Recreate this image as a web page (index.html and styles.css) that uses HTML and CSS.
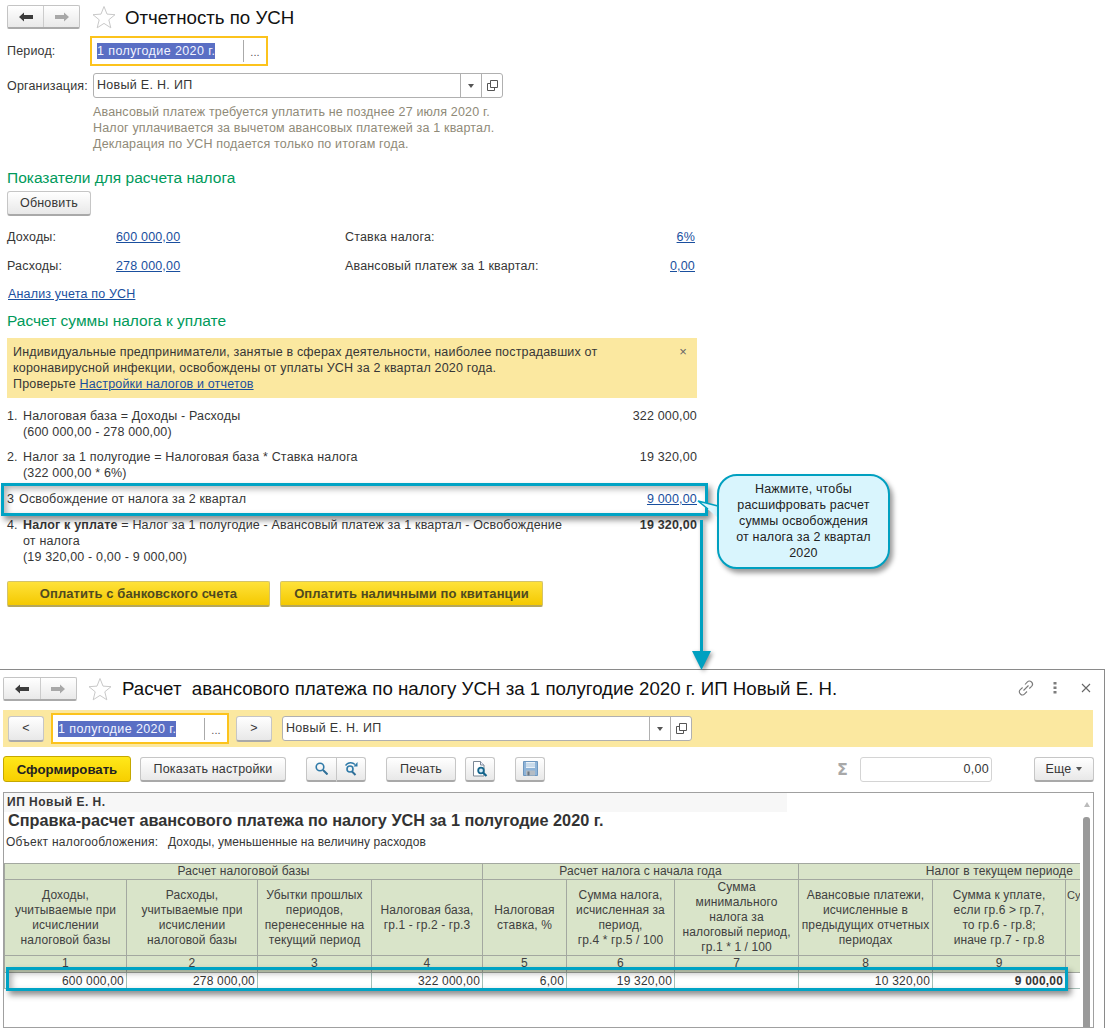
FILE: index.html
```html
<!DOCTYPE html>
<html lang="ru">
<head>
<meta charset="utf-8">
<title>Отчетность по УСН</title>
<link rel="stylesheet" href="styles.css">
</head>
<body>
<div class="page">
  <section class="form-a">
    <div class="head">
      <div class="nav">
        <span class="nav-btn"><svg width="14" height="10" viewBox="0 0 14 10"><path d="M0 5l5-4.500V3h9v4H5v2.500z" fill="#3c3c3c"/></svg></span>
        <span class="nav-btn"><svg width="14" height="10" viewBox="0 0 14 10"><path d="M14 5L9 .5V3H0v4h9v2.500z" fill="#a8a8a8"/></svg></span>
      </div>
      <svg class="star" width="24" height="24" viewBox="0 0 24 24"><path d="M12 1.500l3 7.600 8 .6-6.200 5.100 2 8-6.800-4.400-6.800 4.400 2-8L1 9.700l8-.6z" fill="#fff" stroke="#c9c9c9"/></svg>
      <h1 class="title">Отчетность по УСН</h1>
    </div>
    <div class="field-row r-period">
      <label class="lbl">Период:</label>
      <div class="period-box">
        <span class="period-text"><span class="sel">1 полугодие 2020 г.</span></span>
        <span class="dots">...</span>
      </div>
    </div>
    <div class="field-row r-org">
      <label class="lbl lbl-org">Организация:</label>
      <div class="combo combo-a">
        <span class="combo-text">Новый Е. Н. ИП</span>
        <span class="combo-btn"><i class="caret"></i></span>
        <span class="combo-btn"><svg width="11" height="11" viewBox="0 0 11 11"><path d="M3.500.5h7v7h-7zM3.500 3.500h-3v7h7v-3" fill="none" stroke="#555"/></svg></span>
      </div>
    </div>
    <div class="notes">
      <div>Авансовый платеж требуется уплатить не позднее 27 июля 2020 г.</div>
      <div>Налог уплачивается за вычетом авансовых платежей за 1 квартал.</div>
      <div>Декларация по УСН подается только по итогам года.</div>
    </div>
    <h2 class="green g1">Показатели для расчета налога</h2>
    <button class="btn btn-refresh">Обновить</button>
    <div class="stats s1">
      <span class="st-l">Доходы:</span><a class="link st-v">600 000,00</a>
      <span class="st-l2">Ставка налога:</span><a class="link st-r">6%</a>
    </div>
    <div class="stats s2">
      <span class="st-l">Расходы:</span><a class="link st-v">278 000,00</a>
      <span class="st-l2">Авансовый платеж за 1 квартал:</span><a class="link st-r">0,00</a>
    </div>
    <a class="link analysis">Анализ учета по УСН</a>
    <h2 class="green g2">Расчет суммы налога к уплате</h2>
    <div class="notice">
      <div class="notice-text">Индивидуальные предприниматели, занятые в сферах деятельности, наиболее пострадавших от<br>коронавирусной инфекции, освобождены от уплаты УСН за 2 квартал 2020 года.<br>Проверьте <a class="link">Настройки налогов и отчетов</a></div>
      <span class="notice-x">×</span>
    </div>
    <div class="item i1"><div class="num">1.</div><div class="it">Налоговая база = Доходы - Расходы<br>(600 000,00 - 278 000,00)</div><div class="val">322 000,00</div></div>
    <div class="item i2"><div class="num">2.</div><div class="it">Налог за 1 полугодие = Налоговая база * Ставка налога<br>(322 000,00 * 6%)</div><div class="val">19 320,00</div></div>
    <div class="item i3"><div class="num n3">3</div><div class="it">Освобождение от налога за 2 квартал</div><a class="link val">9 000,00</a></div>
    <div class="item i4"><div class="num">4.</div><div class="it"><b>Налог к уплате</b> = Налог за 1 полугодие - Авансовый платеж за 1 квартал - Освобождение<br>от налога<br>(19 320,00 - 0,00 - 9 000,00)</div><b class="val">19 320,00</b></div>
    <div class="pay">
      <button class="btn-pay">Оплатить с банковского счета</button>
      <button class="btn-pay">Оплатить наличными по квитанции</button>
    </div>
  </section>

  <section class="form-b">
    <div class="head-b">
      <div class="nav nav-b">
        <span class="nav-btn"><svg width="14" height="10" viewBox="0 0 14 10"><path d="M0 5l5-4.500V3h9v4H5v2.500z" fill="#3c3c3c"/></svg></span>
        <span class="nav-btn"><svg width="14" height="10" viewBox="0 0 14 10"><path d="M14 5L9 .5V3H0v4h9v2.500z" fill="#a8a8a8"/></svg></span>
      </div>
      <svg class="star-b" width="24" height="24" viewBox="0 0 24 24"><path d="M12 1.500l3 7.600 8 .6-6.200 5.100 2 8-6.800-4.400-6.800 4.400 2-8L1 9.700l8-.6z" fill="#fff" stroke="#c9c9c9"/></svg>
      <h1 class="title-b">Расчет&nbsp; авансового платежа по налогу УСН за 1 полугодие 2020 г. ИП Новый Е. Н.</h1>
      <div class="win-icons">
        <svg class="ic-link" width="16" height="16" viewBox="0 0 16 16"><path d="M5.500 10.500l5-5M7 4.500l2.200-2.400a2.900 2.900 0 0 1 4.400 4.200l-2.300 2.200M9 11.500l-2.300 2.400a2.900 2.900 0 0 1-4.400-4.200l2.300-2.200" fill="none" stroke="#7a7a7a" stroke-width="1.100"/></svg>
        <svg width="4" height="12" viewBox="0 0 4 12"><path d="M.5 0h3v2.500h-3zM.5 4.500h3V7h-3zM.5 9h3v2.500h-3z" fill="#7d7d7d"/></svg>
        <svg width="10" height="10" viewBox="0 0 10 10"><path d="M1 1l8 8M9 1l-8 8" stroke="#666" stroke-width="1.100"/></svg>
      </div>
    </div>
    <div class="band">
      <button class="btn btn-step">&lt;</button>
      <div class="period-box period-b">
        <span class="period-text"><span class="sel">1 полугодие 2020 г.</span></span>
        <span class="dots">...</span>
      </div>
      <button class="btn btn-step">&gt;</button>
      <div class="combo combo-b">
        <span class="combo-text">Новый Е. Н. ИП</span>
        <span class="combo-btn"><i class="caret"></i></span>
        <span class="combo-btn"><svg width="11" height="11" viewBox="0 0 11 11"><path d="M3.500.5h7v7h-7zM3.500 3.500h-3v7h7v-3" fill="none" stroke="#555"/></svg></span>
      </div>
    </div>
    <div class="tools">
      <button class="btn-go">Сформировать</button>
      <button class="btn t-settings">Показать настройки</button>
      <div class="group">
        <button class="btn g-btn"><svg width="13" height="13" viewBox="0 0 13 13"><circle cx="5" cy="5" r="3.800" fill="none" stroke="#2f7aa8" stroke-width="1.600"/><path d="M8 8l4.500 4.500" stroke="#2f6f98" stroke-width="2"/></svg></button>
        <button class="btn g-btn"><svg width="15" height="15" viewBox="0 0 15 15"><circle cx="6" cy="8" r="3" fill="none" stroke="#2f7aa8" stroke-width="1.600"/><path d="M8 10.500l3.500 3.500" stroke="#2f6f98" stroke-width="2"/><path d="M1.500 4.500C4 1 8.500 1 11 3.500" fill="none" stroke="#2f7aa8" stroke-width="1.300"/><path d="M13.500 1v4.500h-4z" fill="#2f7aa8"/></svg></button>
      </div>
      <button class="btn t-print">Печать</button>
      <button class="btn t-icon t-prev"><svg width="15" height="16" viewBox="0 0 15 16"><path d="M.5.5h7l3.500 3.500v11H.5z" fill="#fff" stroke="#7b8794"/><path d="M7.500.5V4H11" fill="#eef" stroke="#7b8794"/><circle cx="8" cy="9.500" r="2.800" fill="#d5ecf8" stroke="#14658c" stroke-width="1.800"/><path d="M10 11.500l3.500 3.500" stroke="#14658c" stroke-width="2.200"/></svg></button>
      <button class="btn t-icon t-save"><svg width="15" height="15" viewBox="0 0 15 15"><path d="M.5.5h14v14H.5z" fill="#8fb4d8" stroke="#6e97bf"/><path d="M3 1h9v6H3z" fill="#e9f1f8"/><path d="M3 3h9M3 5h9" stroke="#a9c4dc"/><path d="M3 9.500h9V14.500H3z" fill="#b4bcc4"/><path d="M4.500 10.500h2v4h-2z" fill="#6a7580"/></svg></button>
      <span class="sigma">Σ</span>
      <div class="sum">0,00</div>
      <button class="btn t-more">Еще<i class="caret"></i></button>
    </div>
    <div class="report">
      <div class="rep-org">ИП Новый Е. Н.</div>
      <div class="rep-title">Справка-расчет авансового платежа по налогу УСН за 1 полугодие 2020 г.</div>
      <div class="rep-obj"><span>Объект налогообложения:</span><span>Доходы, уменьшенные на величину расходов</span></div>
      <div class="tbl-wrap">
        <table class="tbl">
          <colgroup>
            <col class="c1"><col class="c2"><col class="c3"><col class="c4"><col class="c5"><col class="c6"><col class="c7"><col class="c8"><col class="c9"><col class="c10">
          </colgroup>
          <tr class="h1">
            <th colspan="4">Расчет налоговой базы</th>
            <th colspan="3">Расчет налога с начала года</th>
            <th colspan="3" class="th-right">Налог в текущем периоде</th>
          </tr>
          <tr class="h2">
            <th>Доходы,<br>учитываемые при<br>исчислении<br>налоговой базы</th>
            <th>Расходы,<br>учитываемые при<br>исчислении<br>налоговой базы</th>
            <th>Убытки прошлых<br>периодов,<br>перенесенные на<br>текущий период</th>
            <th>Налоговая база,<br>гр.1 - гр.2 - гр.3</th>
            <th>Налоговая<br>ставка, %</th>
            <th>Сумма налога,<br>исчисленная за<br>период,<br>гр.4 * гр.5 / 100</th>
            <th>Сумма<br>минимального<br>налога за<br>налоговый период,<br>гр.1 * 1 / 100</th>
            <th>Авансовые платежи,<br>исчисленные в<br>предыдущих отчетных<br>периодах</th>
            <th>Сумма к уплате,<br>если гр.6 &gt; гр.7,<br>то гр.6 - гр.8;<br>иначе гр.7 - гр.8</th>
            <th class="th-clip">Су</th>
          </tr>
          <tr class="h3">
            <th>1</th><th>2</th><th>3</th><th>4</th><th>5</th><th>6</th><th>7</th><th>8</th><th>9</th><th></th>
          </tr>
          <tr class="data">
            <td>600 000,00</td><td>278 000,00</td><td></td><td>322 000,00</td><td>6,00</td><td>19 320,00</td><td></td><td>10 320,00</td><td><b>9 000,00</b></td><td></td>
          </tr>
        </table>
      </div>
      <span class="sb-arrow"></span>
      <span class="sb-thumb"></span>
    </div>
  </section>

  <div class="hl hl-top"></div>
  <div class="hl hl-bottom"></div>
  <svg class="pointer" width="24" height="18" viewBox="0 0 24 18"><path d="M1 1l19 5v11z" fill="#d9f5fd"/><path d="M21 6L1 1l10 8" fill="none" stroke="#00a0c0" stroke-width="1.600"/></svg>
  <div class="callout">Нажмите, чтобы расшифровать расчет суммы освобождения от налога за 2 квартал 2020</div>
  <svg class="arrow" width="28" height="156" viewBox="0 0 28 156"><path d="M9.500 4v132" stroke="#00a0c0" stroke-width="3"/><path d="M0 135h19l-9.500 19z" fill="#00a0c0"/></svg>
</div>
</body>
</html>
```

FILE: styles.css
```css
* { box-sizing: border-box; }
html, body { margin: 0; padding: 0; background: #fff; }
body { font-family: "Liberation Sans", Arial, sans-serif; font-size: 12.5px; letter-spacing: .17px; line-height: 16px; color: #363636; }
.page { position: relative; width: 1108px; height: 1028px; overflow: hidden; }
h1, h2 { margin: 0; font-weight: normal; }
button { font-family: inherit; font-size: 12.5px; letter-spacing: .17px; padding: 0; color: #363636; }

.form-a { height: 669px; padding: 5px 0 0 7px; }
.head { display: flex; align-items: center; height: 24px; }
.nav { display: flex; flex: none; width: 73px; height: 24px; border: 1px solid #c4c4c4; border-bottom: 2px solid #aaa; border-radius: 2px; background: linear-gradient(#fff, #e9e9e9); }
.nav-btn { flex: 1; display: flex; align-items: center; justify-content: center; }
.nav-btn + .nav-btn { border-left: 1px solid #ccc; }
.star { margin-left: 12px; flex: none; }
.title { margin-left: 9px; padding-top: 2px; font-size: 18.7px; letter-spacing: 0; color: #111; line-height: 26px; }

.field-row { display: flex; align-items: center; }
.r-period { margin-top: 7px; height: 30px; }
.r-org { margin-top: 7px; height: 25px; }
.lbl { width: 83px; }
.lbl-org { width: 86px; }
.period-box { display: flex; align-items: center; width: 178px; height: 30px; border: 2px solid #fcc31c; background: #fff; }
.period-text { flex: 1; display: flex; align-items: center; height: 22px; padding-left: 5px; letter-spacing: .4px; border-right: 1px solid #aaa; }
.sel { background: #5a6fc4; color: #f2f4ff; white-space: nowrap; }
.dots { width: 22px; text-align: center; font-size: 11px; color: #555; padding-top: 2px; }
.combo { display: flex; align-items: stretch; height: 25px; border: 1px solid #b0b0b0; border-radius: 3px; background: #fff; }
.combo-a { width: 410px; }
.combo-text { flex: 1; padding-left: 3px; line-height: 23px; letter-spacing: .3px; }
.combo-btn { width: 21px; display: flex; align-items: center; justify-content: center; border-left: 1px solid #b0b0b0; }
.caret { display: block; width: 0; height: 0; border: 3px solid transparent; border-top: 4px solid #555; border-bottom: 0; }

.notes { margin: 6px 0 0 86px; color: #8f8a78; }
.green { font-size: 15.5px; letter-spacing: 0; line-height: 20px; color: #009a5b; }
.g1 { margin-top: 16px; }
.btn { height: 25px; border: 1px solid #c6c6c6; border-bottom: 2px solid #a9a9a9; border-radius: 3px; background: linear-gradient(#fff, #e8e8e8); }
.btn-refresh { display: block; margin-top: 3px; width: 84px; }
.stats { display: flex; height: 16px; width: 688px; }
.s1 { margin-top: 13px; }
.s2 { margin-top: 13px; }
.st-l { width: 109px; }
.st-v { width: 64px; white-space: nowrap; }
.st-l2 { margin-left: 165px; }
.st-r { margin-left: auto; }
.link { color: #1a4f9e; text-decoration: underline; }
.analysis { display: block; margin: 12px 0 0 1px; }
.g2 { margin-top: 9px; }
.notice { display: flex; justify-content: space-between; width: 690px; height: 60px; margin-top: 7px; padding: 6px 10px 6px 6px; background: #fbe8a0; }
.notice-x { font-size: 13px; color: #666; }
.item { display: flex; width: 690px; }
.i1 { margin-top: 10px; height: 32px; }
.i2 { margin-top: 9px; height: 32px; }
.i3 { margin-top: 10px; height: 16px; }
.i4 { margin-top: 10px; height: 48px; }
.num { width: 16px; flex: none; }
.n3 { width: 12px; }
.it { flex: 1; }
.val { flex: none; white-space: nowrap; }
.pay { display: flex; gap: 10px; margin-top: 16px; }
.btn-pay { width: 263px; height: 26px; border: 1px solid #d4c36a; border-bottom: 2px solid #b5a75c; border-radius: 2px; background: linear-gradient(#ffe23a, #f4c900); font-size: 13px; letter-spacing: .08px; font-weight: bold; color: #4f4a20; }

.form-b { width: 1105px; height: 359px; border-top: 1px solid #8a8a8a; border-right: 1px solid #8a8a8a; padding-left: 3px; }
.head-b { display: flex; align-items: flex-start; height: 40px; padding-top: 7px; }
.nav-b { width: 74px; }
.star-b { margin-left: 11px; flex: none; }
.title-b { margin-left: 10px; font-size: 18.7px; letter-spacing: 0; color: #111; line-height: 24px; white-space: nowrap; }
.win-icons { display: flex; align-items: center; gap: 24px; height: 22px; margin-left: auto; padding-right: 13px; }
.ic-link { margin-right: -5px; }
.band { display: flex; align-items: center; width: 1090px; height: 37px; padding-left: 5px; background: #fbe8a0; }
.btn-step { width: 36px; height: 26px; }
.period-b { width: 178px; height: 31px; margin: 0 7px; }
.combo-b { width: 410px; margin-left: 10px; }
.tools { display: flex; align-items: center; width: 1091px; height: 26px; margin-top: 9px; }
.btn-go { width: 128px; height: 26px; border: 1px solid #c5a800; border-radius: 3px; background: linear-gradient(#ffe81a, #f7cf00); font-size: 13.2px; letter-spacing: 0; font-weight: bold; color: #222; }
.t-settings { width: 146px; margin-left: 9px; }
.group { display: flex; margin-left: 20px; }
.g-btn { width: 30px; display: flex; align-items: center; justify-content: center; }
.g-btn:first-child { border-radius: 3px 0 0 3px; border-right: 0; }
.g-btn:last-child { border-radius: 0 3px 3px 0; }
.t-print { width: 70px; margin-left: 20px; }
.t-icon { width: 30px; display: flex; align-items: center; justify-content: center; }
.t-prev { margin-left: 9px; }
.t-save { margin-left: 20px; }
.sigma { margin-left: auto; padding-top: 2px; font-family: "DejaVu Sans", sans-serif; font-size: 16px; letter-spacing: 0; font-weight: bold; color: #a8a8a8; line-height: 24px; }
.sum { width: 132px; height: 25px; margin-left: 12px; border: 1px solid #d4d4d4; border-radius: 3px; text-align: right; padding-right: 2px; line-height: 23px; letter-spacing: .3px; }
.t-more { width: 60px; margin-left: 42px; display: flex; align-items: center; justify-content: center; gap: 5px; }
.report { position: relative; width: 1091px; height: 236px; margin-top: 10px; border: 1px solid #a0a0a0; overflow: hidden; }
.rep-org { width: 783px; height: 19px; padding-left: 3px; background: #f7f7f7; font-size: 12px; letter-spacing: .5px; font-weight: bold; line-height: 18px; }
.rep-title { margin-top: -1px; padding-left: 4px; font-size: 16.25px; letter-spacing: 0; font-weight: bold; line-height: 18px; color: #333; white-space: nowrap; }
.rep-obj { display: flex; margin-top: 5px; padding-left: 2px; height: 16px; font-size: 12px; letter-spacing: .08px; }
.rep-obj span:first-child { width: 162px; letter-spacing: .25px; }
.tbl-wrap { width: 1076px; margin-top: 13px; overflow: hidden; }
.tbl { border-collapse: collapse; table-layout: fixed; width: 1076px; font-size: 12px; letter-spacing: .12px; }
.c1 { width: 122px; } .c2 { width: 131px; } .c3 { width: 114px; } .c4 { width: 111px; }
.c5 { width: 84px; } .c6 { width: 108px; } .c7 { width: 124px; } .c8 { width: 134px; }
.c9 { width: 133px; } .c10 { width: 15px; }
.tbl th { background: #d9e4c9; border: 1px solid #a3a8a0; font-weight: normal; color: #404040; padding: 0; line-height: 15px; overflow: hidden; }
.h1 th { height: 16px; }
.h2 th { height: 76px; }
.h3 th { height: 16px; line-height: 14px; padding-bottom: 2px; }
.th-right { text-align: right; padding-right: 7px !important; }
.th-clip { white-space: nowrap; text-align: left; vertical-align: top; font-size: 11px; letter-spacing: 0; padding-left: 1px !important; padding-top: 8px !important; }
.tbl td { height: 16px; border: 1px solid #a6c0b8; text-align: right; padding: 0 2px 0 0; line-height: 14px; white-space: nowrap; letter-spacing: .2px; }
.sb-arrow { position: absolute; right: 3px; top: 9px; width: 0; height: 0; border: 3px solid transparent; border-bottom: 5px solid #bbb; border-top: 0; }
.sb-thumb { position: absolute; right: 3px; top: 24px; bottom: 0; width: 7px; background: #9a9a9a; border-radius: 3px 3px 0 0; }

.hl { position: absolute; border: 3px solid #00a3c4; box-shadow: 3px 4px 6px rgba(0,0,0,.45), inset 3px 3px 6px rgba(0,0,0,.3); }
.hl-top { left: 1px; top: 483px; width: 707px; height: 33px; }
.hl-bottom { left: 6px; top: 967px; width: 1062px; height: 24px; }
.pointer { position: absolute; left: 697px; top: 500px; }
.callout { position: absolute; left: 717px; top: 474px; width: 173px; height: 95px; padding: 5px 16px 0; border: 2px solid #00a0c0; border-radius: 20px; background: #d9f5fd; box-shadow: 3px 4px 5px rgba(0,0,0,.4); text-align: center; color: #222; }
.arrow { position: absolute; left: 692px; top: 516px; filter: drop-shadow(2px 2px 2px rgba(0,0,0,.4)); }
```
